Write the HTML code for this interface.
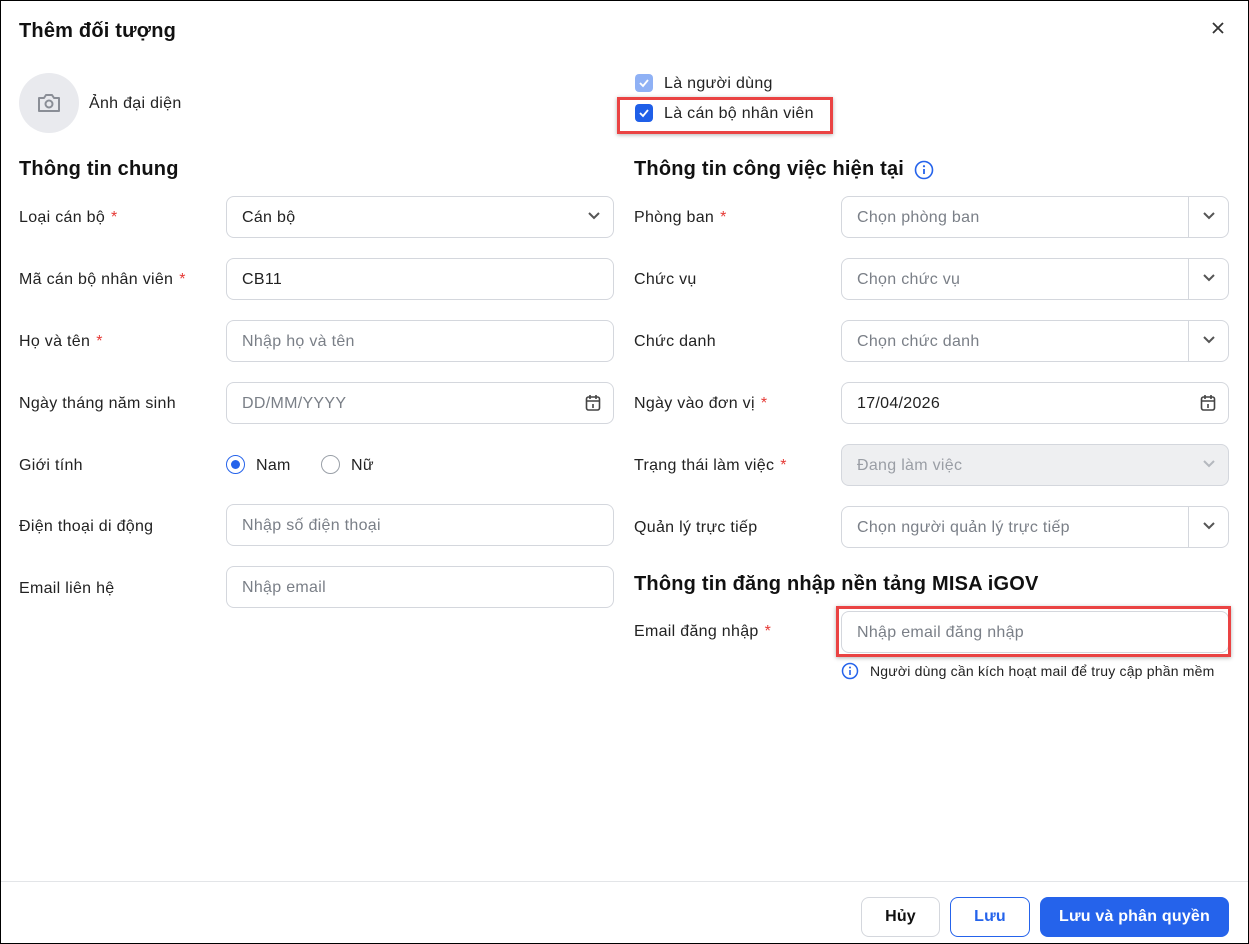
<!DOCTYPE html>
<html><head><meta charset="utf-8"><style>
*{box-sizing:border-box;margin:0;padding:0}
body{width:1249px;height:944px;background:#fff;font-family:"Liberation Sans",sans-serif;color:#1f1f1f;position:relative;overflow:hidden}
.frame{position:absolute;left:0;top:0;width:1249px;height:944px;border:1px solid #000}
.a{position:absolute}
.t{font-size:16px;color:#222;letter-spacing:0.3px;margin-top:1px}
.h{font-size:20px;font-weight:bold;color:#111;letter-spacing:0.2px;margin-top:1px}
.star{color:#e53935;margin-left:6px}
.in{position:absolute;height:42px;border:1px solid #d4d7dd;border-radius:8px;font-size:16px;padding:0 15px;line-height:42px;color:#222;letter-spacing:0.3px}
.ph{color:#7a7f87}
.dd{position:absolute;right:0;top:0;width:40px;height:40px;border-left:1px solid #d4d7dd}
.chev{position:absolute;right:12px;top:14px}
.btn{position:absolute;height:40px;border-radius:8px;font-size:16px;font-weight:bold;text-align:center;line-height:38px;letter-spacing:0.2px}
</style></head><body>
<div class="frame"></div>
<div class="a h" style="left:19px;top:19px">Thêm đối tượng</div>
<svg class="a" style="left:1211px;top:21px" width="14" height="14" viewBox="0 0 14 14"><path d="M2 2L12 12M12 2L2 12" stroke="#333" stroke-width="1.8"/></svg>

<div class="a" style="left:19px;top:73px;width:60px;height:60px;border-radius:50%;background:#e9eaee"></div>
<svg class="a" style="left:36px;top:91px" width="26" height="24" viewBox="0 0 26 24"><path d="M3 7h5l2-3h6l2 3h5v13H3z" fill="none" stroke="#8a8e96" stroke-width="2" stroke-linejoin="round"/><circle cx="13" cy="13" r="3.5" fill="none" stroke="#8a8e96" stroke-width="2"/></svg>
<div class="a t" style="left:89px;top:94px">Ảnh đại diện</div>

<div class="a" style="left:635px;top:74px;width:18px;height:18px;border-radius:4px;background:#8fb1f5"></div>
<svg class="a" style="left:638px;top:77px" width="12" height="12"><path d="M2 6l3 3 5-6" fill="none" stroke="#fff" stroke-width="1.8"/></svg>
<div class="a t" style="left:664px;top:74px">Là người dùng</div>
<div class="a" style="left:617px;top:97px;width:216px;height:37px;border:3px solid #ea4343;box-shadow:0 1px 4px rgba(0,0,0,.3)"></div>
<div class="a" style="left:635px;top:104px;width:18px;height:18px;border-radius:4px;background:#1f5fe8"></div>
<svg class="a" style="left:638px;top:107px" width="12" height="12"><path d="M2 6l3 3 5-6" fill="none" stroke="#fff" stroke-width="1.8"/></svg>
<div class="a t" style="left:664px;top:104px">Là cán bộ nhân viên</div>

<div class="a h" style="left:19px;top:157px">Thông tin chung</div>
<div class="a h" style="left:634px;top:157px">Thông tin công việc hiện tại</div>
<svg class="a" style="left:914px;top:160px" width="20" height="20"><circle cx="10" cy="10" r="8.5" fill="none" stroke="#2563eb" stroke-width="1.6"/><path d="M10 9v5" stroke="#2563eb" stroke-width="1.8"/><circle cx="10" cy="6.2" r="1.1" fill="#2563eb"/></svg>

<!-- left -->
<div class="a t" style="left:19px;top:208px">Loại cán bộ<span class="star">*</span></div>
<div class="in" style="left:226px;top:196px;width:388px">Cán bộ<svg class="chev" width="14" height="10"><path d="M2 2l5 5 5-5" fill="none" stroke="#555" stroke-width="2"/></svg></div>
<div class="a t" style="left:19px;top:270px">Mã cán bộ nhân viên<span class="star">*</span></div>
<div class="in" style="left:226px;top:258px;width:388px">CB11</div>
<div class="a t" style="left:19px;top:332px">Họ và tên<span class="star">*</span></div>
<div class="in ph" style="left:226px;top:320px;width:388px">Nhập họ và tên</div>
<div class="a t" style="left:19px;top:394px">Ngày tháng năm sinh</div>
<div class="in ph" style="left:226px;top:382px;width:388px">DD/MM/YYYY<svg class="chev" style="top:11px" width="16" height="18" viewBox="0 0 16 18"><rect x="1.5" y="3" width="13" height="13" rx="2" fill="none" stroke="#444" stroke-width="1.6"/><path d="M1.5 7h13M5 1v4M11 1v4M8 10v4" stroke="#444" stroke-width="1.6"/></svg></div>
<div class="a t" style="left:19px;top:456px">Giới tính</div>
<div class="a" style="left:226px;top:455px;width:19px;height:19px;border-radius:50%;border:1.5px solid #2563eb"></div>
<div class="a" style="left:231px;top:460px;width:9px;height:9px;border-radius:50%;background:#2563eb"></div>
<div class="a t" style="left:256px;top:456px">Nam</div>
<div class="a" style="left:321px;top:455px;width:19px;height:19px;border-radius:50%;border:1.5px solid #9aa0a8"></div>
<div class="a t" style="left:351px;top:456px">Nữ</div>
<div class="a t" style="left:19px;top:517px">Điện thoại di động</div>
<div class="in ph" style="left:226px;top:504px;width:388px">Nhập số điện thoại</div>
<div class="a t" style="left:19px;top:579px">Email liên hệ</div>
<div class="in ph" style="left:226px;top:566px;width:388px">Nhập email</div>

<!-- right -->
<div class="a t" style="left:634px;top:208px">Phòng ban<span class="star">*</span></div>
<div class="in ph" style="left:841px;top:196px;width:388px">Chọn phòng ban<div class="dd"><svg class="chev" width="14" height="10"><path d="M2 2l5 5 5-5" fill="none" stroke="#555" stroke-width="2"/></svg></div></div>
<div class="a t" style="left:634px;top:270px">Chức vụ</div>
<div class="in ph" style="left:841px;top:258px;width:388px">Chọn chức vụ<div class="dd"><svg class="chev" width="14" height="10"><path d="M2 2l5 5 5-5" fill="none" stroke="#555" stroke-width="2"/></svg></div></div>
<div class="a t" style="left:634px;top:332px">Chức danh</div>
<div class="in ph" style="left:841px;top:320px;width:388px">Chọn chức danh<div class="dd"><svg class="chev" width="14" height="10"><path d="M2 2l5 5 5-5" fill="none" stroke="#555" stroke-width="2"/></svg></div></div>
<div class="a t" style="left:634px;top:394px">Ngày vào đơn vị<span class="star">*</span></div>
<div class="in" style="left:841px;top:382px;width:388px">17/04/2026<svg class="chev" style="top:11px" width="16" height="18" viewBox="0 0 16 18"><rect x="1.5" y="3" width="13" height="13" rx="2" fill="none" stroke="#444" stroke-width="1.6"/><path d="M1.5 7h13M5 1v4M11 1v4M8 10v4" stroke="#444" stroke-width="1.6"/></svg></div>
<div class="a t" style="left:634px;top:456px">Trạng thái làm việc<span class="star">*</span></div>
<div class="in ph" style="left:841px;top:444px;width:388px;background:#eeeff1;color:#9a9ea5">Đang làm việc<svg class="chev" width="14" height="10"><path d="M2 2l5 5 5-5" fill="none" stroke="#b4b8be" stroke-width="2"/></svg></div>
<div class="a t" style="left:634px;top:518px">Quản lý trực tiếp</div>
<div class="in ph" style="left:841px;top:506px;width:388px">Chọn người quản lý trực tiếp<div class="dd"><svg class="chev" width="14" height="10"><path d="M2 2l5 5 5-5" fill="none" stroke="#555" stroke-width="2"/></svg></div></div>
<div class="a h" style="left:634px;top:572px">Thông tin đăng nhập nền tảng MISA iGOV</div>
<div class="a t" style="left:634px;top:622px">Email đăng nhập<span class="star">*</span></div>
<div class="in ph" style="left:841px;top:611px;width:388px">Nhập email đăng nhập</div>
<div class="a" style="left:836px;top:606px;width:395px;height:51px;border:3px solid #ea4343;box-shadow:0 1px 4px rgba(0,0,0,.3)"></div>
<svg class="a" style="left:841px;top:662px" width="18" height="18"><circle cx="9" cy="9" r="7.5" fill="none" stroke="#2563eb" stroke-width="1.5"/><path d="M9 8v5" stroke="#2563eb" stroke-width="1.6"/><circle cx="9" cy="5.5" r="1" fill="#2563eb"/></svg>
<div class="a" style="left:870px;top:663px;font-size:14px;color:#222;letter-spacing:0.2px">Người dùng cần kích hoạt mail để truy cập phần mềm</div>

<div class="a" style="left:1px;top:881px;width:1247px;height:1px;background:#e3e5e8"></div>
<div class="btn" style="left:861px;top:897px;width:79px;border:1px solid #d4d7dd;color:#111">Hủy</div>
<div class="btn" style="left:950px;top:897px;width:80px;border:1px solid #2563eb;color:#2563eb">Lưu</div>
<div class="btn" style="left:1040px;top:897px;width:189px;background:#2563eb;color:#fff;line-height:40px">Lưu và phân quyền</div>
</body></html>
